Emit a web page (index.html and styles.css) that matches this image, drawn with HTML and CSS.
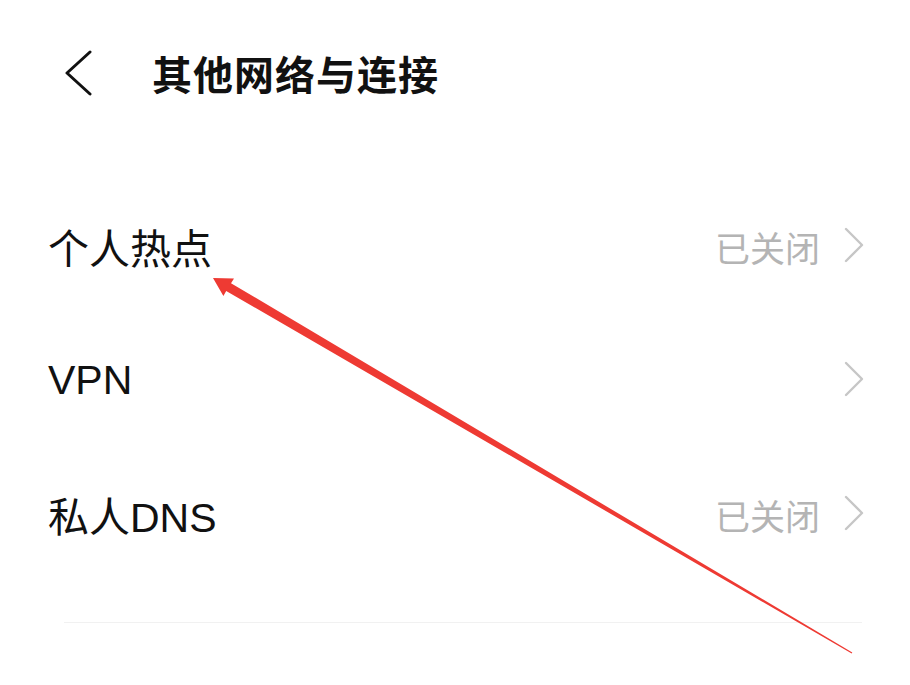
FILE: index.html
```html
<!DOCTYPE html>
<html lang="zh-CN">
<head>
<meta charset="utf-8">
<title>其他网络与连接</title>
<link rel="stylesheet" href="styles.css">
</head>
<body>
<div class="page">
  <header class="header">
    <svg class="back" viewBox="0 0 30 46" width="30" height="46">
      <polyline points="26,2 3,23 26,44" fill="none" stroke="#111" stroke-width="3" stroke-linecap="round" stroke-linejoin="round"/>
    </svg>
    <h1 class="title">其他网络与连接</h1>
  </header>
  <ul class="list">
    <li class="row">
      <span class="label">个人热点</span>
      <span class="value">已关闭</span>
      <svg class="chev" viewBox="0 0 20 36" width="20" height="36"><polyline points="2,2 18,18 2,34" fill="none" stroke="#c6c6c6" stroke-width="2.4" stroke-linecap="round" stroke-linejoin="round"/></svg>
    </li>
    <li class="row">
      <span class="label">VPN</span>
      <svg class="chev" viewBox="0 0 20 36" width="20" height="36"><polyline points="2,2 18,18 2,34" fill="none" stroke="#c6c6c6" stroke-width="2.4" stroke-linecap="round" stroke-linejoin="round"/></svg>
    </li>
    <li class="row">
      <span class="label">私人DNS</span>
      <span class="value">已关闭</span>
      <svg class="chev" viewBox="0 0 20 36" width="20" height="36"><polyline points="2,2 18,18 2,34" fill="none" stroke="#c6c6c6" stroke-width="2.4" stroke-linecap="round" stroke-linejoin="round"/></svg>
    </li>
  </ul>
  <div class="divider"></div>
  <svg class="annot" viewBox="0 0 910 685" width="910" height="685">
    <polygon fill="#ee3a33" points="213,278 234,278.5 231,283.2 852.3,652.5 851.7,653.5 226.2,291 223.4,296"/>
  </svg>
</div>
</body>
</html>
```
FILE: styles.css
```css
html, body {
  margin: 0;
  padding: 0;
  background: #ffffff;
}
.page {
  position: relative;
  width: 910px;
  height: 685px;
  overflow: hidden;
  font-family: "Liberation Sans", "Noto Sans CJK SC", sans-serif;
  color: #111111;
}
.header {
  height: 146px;
  display: flex;
  align-items: center;
  padding-left: 64px;
  box-sizing: border-box;
}
.back {
  display: block;
  flex: none;
}
.title {
  margin: 0 0 0 58px;
  font-size: 40px;
  font-weight: 700;
  font-family: "Noto Sans CJK SC", sans-serif;
  color: #111111;
  letter-spacing: 1px;
}
.list {
  list-style: none;
  margin: 33px 0 0 0;
  padding: 0 46px 0 48px;
}
.row {
  height: 134px;
  display: flex;
  align-items: center;
}
.label {
  flex: 1;
  font-size: 41px;
  color: #111111;
}
.value {
  font-size: 35px;
  color: #b4b4b4;
  margin-right: 24px;
  font-family: "Noto Sans CJK SC", sans-serif;
}
.chev {
  display: block;
  flex: none;
  margin-top: -2px;
}
.divider {
  margin: 41px 48px 0 64px;
  height: 1px;
  background: #f1f1f1;
}
.annot {
  position: absolute;
  left: 0;
  top: 0;
  pointer-events: none;
}
```
